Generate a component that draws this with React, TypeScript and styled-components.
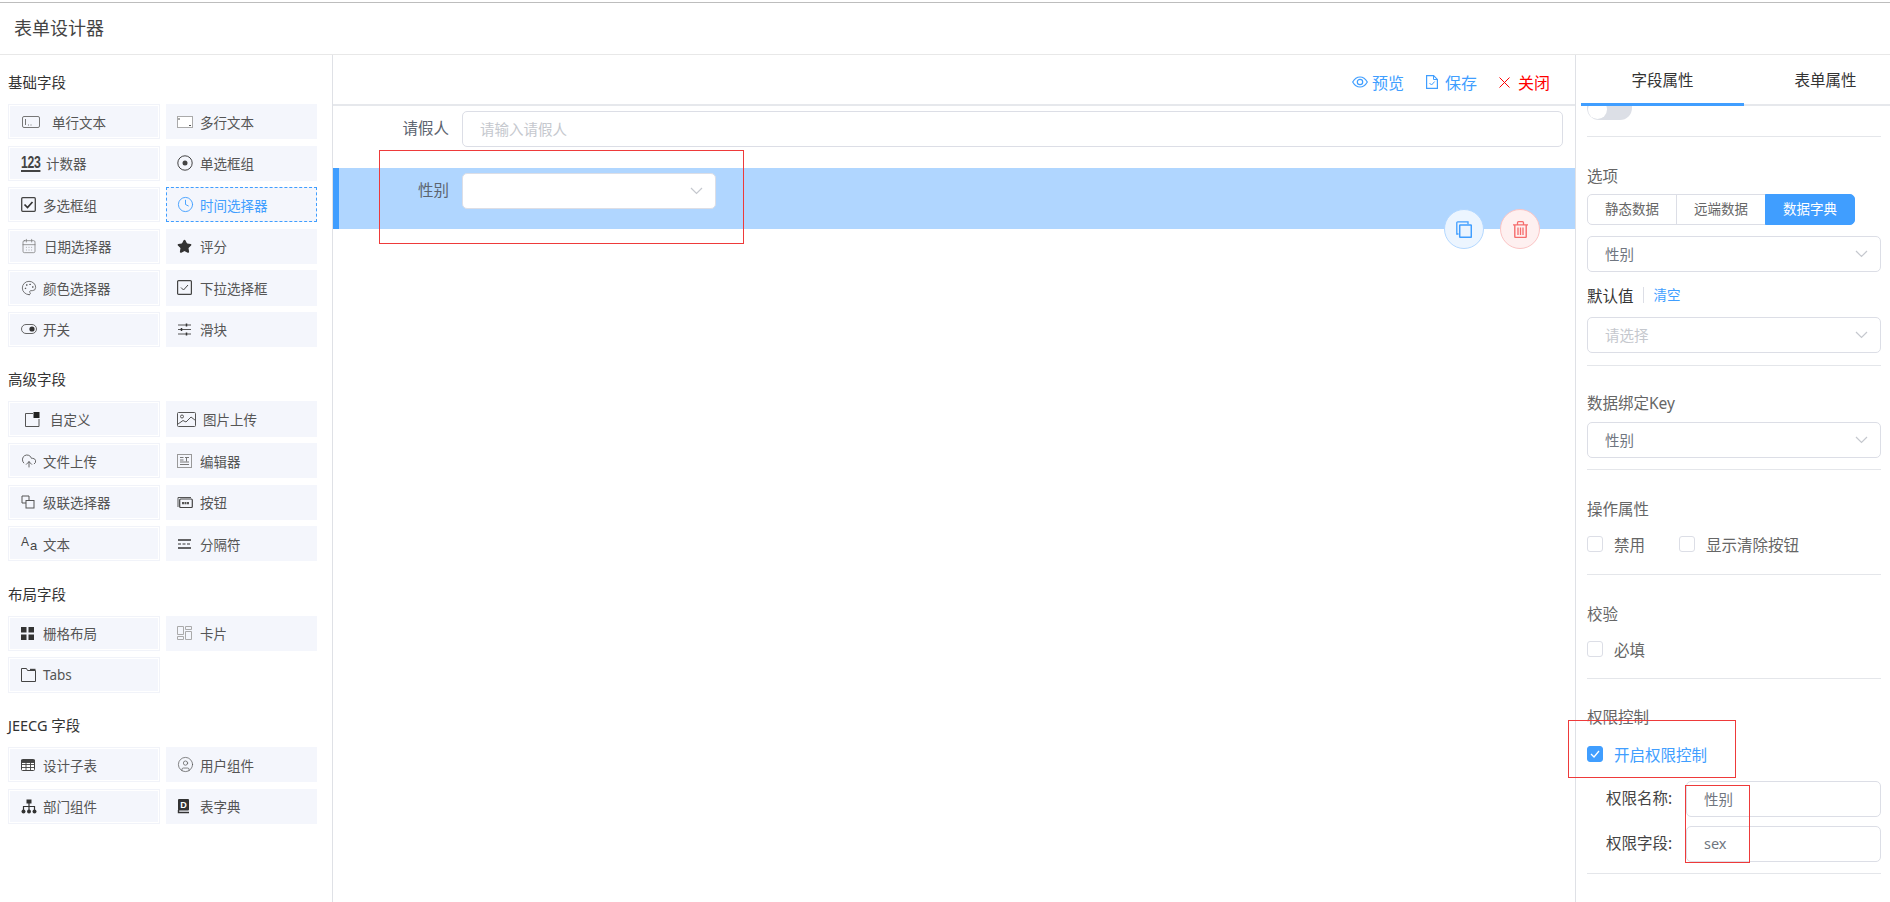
import React from 'react'
import styled, { createGlobalStyle } from 'styled-components'
import { CalendarDays, CircleUser, Clock, CloudUpload, Palette, Star } from 'lucide-react'

const Global = createGlobalStyle`
  html, body {
    margin: 0;
    padding: 0;
    background: #fff;
  }
  body {
    font-family: 'Noto Sans', 'Noto Sans CJK SC', sans-serif;
    color: #515a6e;
    overflow: hidden;
  }
  * {
    box-sizing: border-box;
  }
`

const Page = styled.div`
  position: relative;
  width: 1890px;
  height: 902px;
  overflow: hidden;
  padding-top: 2px;
`

const Header = styled.header`
  height: 53px;
  border-top: 1px solid #bdbdbd;
  border-bottom: 1px solid #e8e8e8;
  padding-left: 14px;
  font-size: 18px;
  line-height: 51px;
  color: #444;
`

const Body = styled.div`
  display: flex;
  height: 847px;
`

const LeftPanel = styled.aside`
  flex: none;
  width: 333px;
  border-right: 1px solid #dfe1e6;
  padding: 18px 0 0 8px;
`

const FieldSection = styled.section`
  margin-bottom: 23.400px;
`

const SectionTitle = styled.h3`
  margin: 0 0 11px;
  height: 20px;
  font-size: 14.5px;
  font-weight: 400;
  line-height: 18px;
  color: #333;
`

const FieldGrid = styled.div`
  display: grid;
  grid-template-columns: 152px 151px;
  grid-auto-rows: 35.2px;
  column-gap: 6px;
  row-gap: 6.4px;
`

const FieldItem = styled.div<{ $active?: boolean; $slot: number }>`
  display: flex;
  align-items: center;
  padding-left: 13px;
  background: #f4f6fc;
  font-size: 13.5px;
  color: ${(p) => (p.$active ? '#409eff' : '#555')};
  border: ${(p) => (p.$active ? '1px dashed #409eff' : 'none')};
  &:nth-child(odd) {
    box-shadow: inset 0 0 0 1px #f1f3f9, inset 0 0 0 2px #fff;
  }
  &:nth-child(even) {
    padding-left: ${(p) => (p.$active ? 10 : 11)}px;
  }
  > span:first-child {
    flex: none;
    display: flex;
    align-items: center;
    width: ${(p) => p.$slot}px;
  }
`

const CountGlyph = styled.span`
  display: inline-block;
  flex: none;
  width: 27px;
  border-bottom: 2px solid #444;
  font-family: 'Liberation Sans', sans-serif;
  font-size: 17px;
  font-weight: 700;
  line-height: 15px;
  letter-spacing: -0.5px;
  color: #444;
  transform: scaleX(0.72);
  transform-origin: left center;
`

const TextGlyph = styled.span`
  font-family: 'Liberation Sans', sans-serif;
  font-size: 12px;
  line-height: 16px;
  color: #444;
  position: relative;
  top: -2px;
  b {
    font-weight: 400;
    font-size: 13px;
    position: relative;
    top: 4px;
    left: 1px;
  }
`

const Center = styled.main`
  flex: none;
  width: 1242px;
  position: relative;
`

const Toolbar = styled.div`
  display: flex;
  justify-content: flex-end;
  align-items: center;
  gap: 22px;
  height: 51px;
  padding: 5px 25px 0 0;
  border-bottom: 2px solid #e6e8ec;
`

const ToolButton = styled.span<{ $danger?: boolean; $gap: number }>`
  display: flex;
  align-items: center;
  gap: ${(p) => p.$gap}px;
  font-size: 16px;
  color: ${(p) => (p.$danger ? '#f00' : '#409eff')};
`

const FormRow = styled.div<{ $selected?: boolean }>`
  position: relative;
  display: flex;
  align-items: flex-start;
  height: ${(p) => (p.$selected ? 61 : 46)}px;
  padding: 5px 12px 0 0;
  margin-bottom: ${(p) => (p.$selected ? 0 : 16)}px;
  border-left: 6px solid ${(p) => (p.$selected ? '#409eff' : 'transparent')};
  background: ${(p) => (p.$selected ? '#b0d6ff' : 'transparent')};
`

const FormLabel = styled.label`
  flex: none;
  width: 110px;
  margin-right: 13px;
  text-align: right;
  font-size: 15.5px;
  line-height: 35px;
  color: #5c6470;
`

const Control = styled.div<{ $w?: number; $placeholder?: boolean }>`
  display: flex;
  align-items: center;
  justify-content: space-between;
  flex: ${(p) => (p.$w ? `none` : '1')};
  width: ${(p) => (p.$w ? `${p.$w}px` : 'auto')};
  height: 36px;
  padding: 0 12px 2px 17px;
  background: #fff;
  border: 1px solid #dcdee6;
  border-radius: 5px;
  font-size: 14.5px;
  color: ${(p) => (p.$placeholder ? '#c5c8ce' : '#707680')};
  svg {
    position: relative;
    top: 1px;
  }
`

const RowActions = styled.div`
  position: absolute;
  right: 35px;
  bottom: -20px;
  display: flex;
  gap: 16px;
`

const RoundButton = styled.span<{ $danger?: boolean }>`
  display: flex;
  align-items: center;
  justify-content: center;
  width: 40px;
  height: 40px;
  border-radius: 50%;
  border: 1px solid ${(p) => (p.$danger ? '#fbc4c4' : '#b3d8ff')};
  background: ${(p) => (p.$danger ? '#fef0f0' : '#ecf5ff')};
  color: ${(p) => (p.$danger ? '#f56c6c' : '#409eff')};
`

const RightPanel = styled.aside`
  flex: none;
  width: 315px;
  border-left: 1px solid #dfe1e6;
  overflow: hidden;
`

const TabBar = styled.div`
  display: flex;
  height: 51px;
  margin-left: 5px;
  border-bottom: 2px solid #e6e8ec;
`

const Tab = styled.div<{ $active?: boolean }>`
  flex: none;
  width: 163px;
  height: 51px;
  text-align: center;
  font-size: 15.5px;
  line-height: 50px;
  color: #333;
  border-bottom: 3px solid ${(p) => (p.$active ? '#409eff' : 'transparent')};
`

const PropGroup = styled.div<{ $pt: number; $pb: number }>`
  margin: 0 9px 0 11px;
  padding: ${(p) => p.$pt}px 0 ${(p) => p.$pb}px;
  border-bottom: 1px solid #e4e6ea;
`

const ClippedToggle = styled.div`
  width: 45px;
  height: 14px;
  background: #dcdfe6;
  border-radius: 0 0 12px 12px;
  overflow: hidden;
  position: relative;
  &::after {
    content: '';
    position: absolute;
    left: 1px;
    top: -6px;
    width: 19px;
    height: 19px;
    border-radius: 50%;
    background: #fff;
  }
`

const PropLabel = styled.div<{ $mb: number }>`
  height: 22px;
  margin-bottom: ${(p) => p.$mb}px;
  font-size: 15.5px;
  line-height: 20px;
  color: #666;
`

const Segmented = styled.div`
  display: flex;
  width: 268px;
  height: 31px;
  margin-bottom: 11px;
`

const Segment = styled.span<{ $active?: boolean }>`
  flex: 1;
  margin-left: -1px;
  text-align: center;
  font-size: 13.5px;
  line-height: 28px;
  border: 1px solid ${(p) => (p.$active ? '#409eff' : '#dcdee6')};
  background: ${(p) => (p.$active ? '#409eff' : '#fff')};
  color: ${(p) => (p.$active ? '#fff' : '#666')};
  &:first-child {
    margin-left: 0;
    border-radius: 5px 0 0 5px;
  }
  &:last-child {
    border-radius: 0 5px 5px 0;
  }
`

const DefaultRow = styled.div`
  display: flex;
  align-items: center;
  height: 22px;
  margin: 12px 0 11px;
  font-size: 15.5px;
  color: #333;
`

const ClearLink = styled.span`
  margin-left: 9px;
  padding-left: 10px;
  border-left: 1px solid #dcdee6;
  font-size: 13.5px;
  line-height: 16px;
  color: #409eff;
`

const CheckRow = styled.div<{ $mb?: number }>`
  display: flex;
  height: 22px;
  gap: 34px;
  margin-bottom: ${(p) => p.$mb ?? 0}px;
`

const CheckItem = styled.span<{ $checked?: boolean }>`
  display: flex;
  align-items: center;
  gap: 11px;
  font-size: 15.5px;
  color: ${(p) => (p.$checked ? '#409eff' : '#666')};
`

const CheckBox = styled.i<{ $checked?: boolean }>`
  display: flex;
  align-items: center;
  justify-content: center;
  width: 16px;
  height: 16px;
  border-radius: 3px;
  border: 1px solid ${(p) => (p.$checked ? '#409eff' : '#dcdee6')};
  background: ${(p) => (p.$checked ? '#409eff' : '#fff')};
`

const PermRow = styled.div`
  display: flex;
  align-items: center;
  margin-bottom: 9px;
  &:last-child {
    margin-bottom: 0;
  }
`

const PermLabel = styled.label`
  flex: none;
  width: 99px;
  padding: 0 0 3px 19px;
  font-size: 15.5px;
  color: #444;
`

const Annotation = styled.div<{ $x: number; $y: number; $w: number; $h: number }>`
  position: absolute;
  left: ${(p) => p.$x}px;
  top: ${(p) => p.$y}px;
  width: ${(p) => p.$w}px;
  height: ${(p) => p.$h}px;
  border: 1px solid #ee3a3a;
  pointer-events: none;
`

const Chevron = () => (
  <svg width="13" height="8" viewBox="0 0 13 8" fill="none" stroke="#c5c8ce" strokeWidth="1.2">
    <polyline points="1,1 6.5,6.5 12,1" />
  </svg>
)

const Svg: React.FC<{ w?: number; h?: number; children: React.ReactNode }> = ({ w = 16, h = 16, children }) => (
  <svg width={w} height={h} viewBox={`0 0 ${w} ${h}`} fill="none" stroke="currentColor" strokeWidth="1">
    {children}
  </svg>
)

const icons = {
  input: (
    <Svg w={20} h={12}>
      <rect x="1.5" y="0.5" width="17" height="11" rx="1.5" stroke="#777" />
      <path d="M4.5 3v6M7 9h1M9.5 9h1" stroke="#777" />
    </Svg>
  ),
  textarea: (
    <Svg w={16} h={12}>
      <rect x="0.5" y="0.5" width="15" height="11" fill="#fff" stroke="#aaa" />
      <path d="M2 2v2M12 9.500h2" stroke="#555" />
    </Svg>
  ),
  count: <CountGlyph>123</CountGlyph>,
  radio: (
    <Svg>
      <circle cx="8" cy="8" r="7.200" stroke="#444" />
      <circle cx="8" cy="8" r="2.500" fill="#444" stroke="none" />
    </Svg>
  ),
  check: (
    <Svg w={15} h={15}>
      <rect x="0.700" y="0.700" width="13.600" height="13.600" rx="1" stroke="#444" strokeWidth="1.300" />
      <path d="M3.500 7.500l3 3 5-5.500" stroke="#333" strokeWidth="1.700" />
    </Svg>
  ),
  time: <Clock size={17} strokeWidth={1.3} />,
  date: <CalendarDays size={16} strokeWidth={1.1} color="#777" />,
  star: <Star size={15} fill="#333" color="#333" />,
  palette: <Palette size={16} strokeWidth={1.2} color="#555" />,
  select: (
    <Svg w={15} h={15}>
      <rect x="0.600" y="0.600" width="13.800" height="13.800" rx="1" stroke="#444" strokeWidth="1.200" />
      <path d="M4 7.500l2.500 2.500 4.500-5" stroke="#444" />
    </Svg>
  ),
  toggle: (
    <Svg w={16} h={10}>
      <rect x="0.500" y="0.500" width="15" height="9" rx="4.500" stroke="#666" />
      <circle cx="11" cy="5" r="2.600" fill="#333" stroke="none" />
    </Svg>
  ),
  slider: (
    <Svg w={15} h={13}>
      <path d="M1 2h13M1 6.500h13M1 11h13" stroke="#555" />
      <path d="M9.500 .5v3M4.500 5v3M9.500 9.500v3" stroke="#333" strokeWidth="1.500" />
    </Svg>
  ),
  custom: (
    <Svg w={19} h={15}>
      <path d="M12 1.500H4.500v13H18V7" stroke="#555" />
      <rect x="12.500" y="0" width="6" height="6" fill="#222" stroke="none" />
    </Svg>
  ),
  image: (
    <Svg w={20} h={15}>
      <rect x="0.500" y="0.500" width="18" height="14" rx="1" stroke="#555" />
      <circle cx="5" cy="4.500" r="1.500" stroke="#555" />
      <path d="M1 12l5-3.500 3 1.500 5-5 4.500 3.500" stroke="#555" />
    </Svg>
  ),
  upload: <CloudUpload size={16} strokeWidth={1.2} color="#444" />,
  editor: (
    <Svg w={15} h={14}>
      <rect x="0.500" y="0.500" width="14" height="13" stroke="#999" />
      <path d="M3 3.500h3.500M8 3.500h4M9.500 3.500v4M3 6h3.500M3 8h9M3 10.500h9" stroke="#777" />
    </Svg>
  ),
  cascader: (
    <Svg w={14} h={14}>
      <path d="M8 5V1H1v7h4" stroke="#555" />
      <rect x="5" y="5.500" width="8" height="7.500" stroke="#555" />
    </Svg>
  ),
  button: (
    <Svg w={16} h={12}>
      <path d="M1 11V1.500h13" stroke="#555" />
      <rect x="2.700" y="3" width="12.600" height="8.500" rx="1" stroke="#444" strokeWidth="1.200" />
      <path d="M5 7.200h7.500" stroke="#555" strokeWidth="2.200" strokeDasharray="2 0.500" />
    </Svg>
  ),
  text: (
    <TextGlyph>
      A<b>a</b>
    </TextGlyph>
  ),
  divider: (
    <Svg w={15} h={10}>
      <path d="M1 1h13M1 9h13" stroke="#333" strokeWidth="1.300" />
      <path d="M1 5h13" stroke="#333" strokeDasharray="3 1.500" />
    </Svg>
  ),
  grid: (
    <Svg w={13} h={13}>
      <path d="M0 0h5.500v5.500H0zM7.500 0H13v5.500H7.500zM0 7.500h5.500V13H0zM7.500 7.500H13V13H7.500z" fill="#333" stroke="none" />
    </Svg>
  ),
  card: (
    <Svg w={15} h={14}>
      <path d="M0.500 0.500h6v8h-6zM0.500 10.500h6v3h-6zM8.500 0.500h6v3h-6zM8.500 5.500h6v8h-6z" stroke="#aaa" />
    </Svg>
  ),
  tabs: (
    <Svg w={15} h={14}>
      <path d="M0.500 13.500V0.500h5l1 2h8v11z" stroke="#444" />
      <path d="M9 0.800h5.500v1.500H9z" fill="#444" stroke="none" />
    </Svg>
  ),
  table: (
    <Svg w={14} h={12}>
      <rect x="0.500" y="0.500" width="13" height="11" rx="1" fill="#fff" stroke="#444" />
      <path d="M0.500 1h13v2.500H.5zM0.500 5.500h13M0.500 8.500h13M5 3v8M9.500 3v8" fill="#444" stroke="#444" strokeWidth="0.900" />
    </Svg>
  ),
  user: <CircleUser size={17} strokeWidth={1} color="#555" />,
  org: (
    <Svg w={16} h={15}>
      <rect x="5.500" y="0.500" width="5" height="4" fill="#333" stroke="none" />
      <path d="M8 4v7M2.500 11V7.500h11V11" stroke="#333" strokeWidth="1.200" />
      <circle cx="2.500" cy="12.500" r="2" fill="#333" stroke="none" />
      <circle cx="8" cy="12.500" r="2" fill="#333" stroke="none" />
      <circle cx="13.500" cy="12.500" r="2" fill="#333" stroke="none" />
    </Svg>
  ),
  dict: (
    <Svg w={13} h={15}>
      <rect x="1" y="0" width="11" height="11.500" rx="1" fill="#333" stroke="none" />
      <path d="M1.500 11v2.500h10.500" stroke="#333" strokeWidth="1.400" />
      <text x="3.300" y="9" fontSize="9" fontWeight="700" fontFamily="Liberation Sans" fill="#fff" stroke="none">
        D
      </text>
    </Svg>
  ),
}

const EyeIcon = () => (
  <Svg w={16} h={12}>
    <path d="M.7 6C2.500 2.800 5 1 8 1s5.500 1.800 7.300 5C13.500 9.200 11 11 8 11S2.500 9.200.7 6z" strokeWidth="1.200" />
    <circle cx="8" cy="6" r="2.700" strokeWidth="1.200" />
  </Svg>
)

const SaveIcon = () => (
  <Svg w={12} h={14}>
    <path d="M.6.600h7L11.400 4.400v9H.6z" strokeWidth="1.200" />
    <path d="M7.500 1v3.500H11M3.500 8l2 2 3.200-3.500" />
  </Svg>
)

const CloseIcon = () => (
  <Svg w={11} h={11}>
    <path d="M.5.500l10 10M10.500.500l-10 10" />
  </Svg>
)

const CopyIcon = () => (
  <Svg w={16} h={17}>
    <path d="M2.500 13H.8V1.800a1 1 0 0 1 1-1H12v2.500" strokeWidth="1.300" />
    <rect x="3.700" y="4" width="11.600" height="12.300" rx=".5" strokeWidth="1.500" />
  </Svg>
)

const TrashIcon = () => (
  <Svg w={15} h={17}>
    <path d="M0 3.800h15M4.500 3.500V1.700a1 1 0 0 1 1-1h4a1 1 0 0 1 1 1v1.800" strokeWidth="1.300" />
    <path d="M1.800 4v11.500a1 1 0 0 0 1 1h9.400a1 1 0 0 0 1-1V4" strokeWidth="1.400" />
    <path d="M5 6.500v7.500M7.500 6.500v7.500M10 6.500v7.500" strokeWidth="1.300" />
  </Svg>
)

type Field = { label: string; icon: keyof typeof icons; slot?: number; active?: boolean }

const sections: { title: string; items: Field[] }[] = [
  {
    title: '基础字段',
    items: [
      { label: '单行文本', icon: 'input', slot: 31 },
      { label: '多行文本', icon: 'textarea' },
      { label: '计数器', icon: 'count', slot: 25 },
      { label: '单选框组', icon: 'radio' },
      { label: '多选框组', icon: 'check' },
      { label: '时间选择器', icon: 'time', active: true },
      { label: '日期选择器', icon: 'date', slot: 23 },
      { label: '评分', icon: 'star' },
      { label: '颜色选择器', icon: 'palette' },
      { label: '下拉选择框', icon: 'select' },
      { label: '开关', icon: 'toggle' },
      { label: '滑块', icon: 'slider' },
    ],
  },
  {
    title: '高级字段',
    items: [
      { label: '自定义', icon: 'custom', slot: 29 },
      { label: '图片上传', icon: 'image', slot: 26 },
      { label: '文件上传', icon: 'upload' },
      { label: '编辑器', icon: 'editor' },
      { label: '级联选择器', icon: 'cascader' },
      { label: '按钮', icon: 'button' },
      { label: '文本', icon: 'text' },
      { label: '分隔符', icon: 'divider' },
    ],
  },
  {
    title: '布局字段',
    items: [
      { label: '栅格布局', icon: 'grid' },
      { label: '卡片', icon: 'card' },
      { label: 'Tabs', icon: 'tabs' },
    ],
  },
  {
    title: 'JEECG 字段',
    items: [
      { label: '设计子表', icon: 'table' },
      { label: '用户组件', icon: 'user' },
      { label: '部门组件', icon: 'org' },
      { label: '表字典', icon: 'dict' },
    ],
  },
]

const App: React.FC = () => (
  <Page>
    <Global />
    <Header>表单设计器</Header>
    <Body>
      <LeftPanel>
        {sections.map((section) => (
          <FieldSection key={section.title}>
            <SectionTitle>{section.title}</SectionTitle>
            <FieldGrid>
              {section.items.map((item, i) => (
                <FieldItem key={item.label} $active={item.active} $slot={item.slot ?? (i % 2 ? 23 : 22)}>
                  <span>{icons[item.icon]}</span>
                  <span>{item.label}</span>
                </FieldItem>
              ))}
            </FieldGrid>
          </FieldSection>
        ))}
      </LeftPanel>

      <Center>
        <Toolbar>
          <ToolButton $gap={4}>
            <EyeIcon />
            预览
          </ToolButton>
          <ToolButton $gap={7}>
            <SaveIcon />
            保存
          </ToolButton>
          <ToolButton $gap={8} $danger>
            <CloseIcon />
            关闭
          </ToolButton>
        </Toolbar>
        <FormRow>
          <FormLabel>请假人</FormLabel>
          <Control $placeholder>请输入请假人</Control>
        </FormRow>
        <FormRow $selected>
          <FormLabel>性别</FormLabel>
          <Control $w={254}>
            <span />
            <Chevron />
          </Control>
          <RowActions>
            <RoundButton>
              <CopyIcon />
            </RoundButton>
            <RoundButton $danger>
              <TrashIcon />
            </RoundButton>
          </RowActions>
        </FormRow>
      </Center>

      <RightPanel>
        <TabBar>
          <Tab $active>字段属性</Tab>
          <Tab>表单属性</Tab>
        </TabBar>
        <PropGroup $pt={0} $pb={16}>
          <ClippedToggle />
        </PropGroup>
        <PropGroup $pt={29} $pb={12}>
          <PropLabel $mb={6}>选项</PropLabel>
          <Segmented>
            <Segment>静态数据</Segment>
            <Segment>远端数据</Segment>
            <Segment $active>数据字典</Segment>
          </Segmented>
          <Control>
            性别
            <Chevron />
          </Control>
          <DefaultRow>
            默认值
            <ClearLink>清空</ClearLink>
          </DefaultRow>
          <Control $placeholder>
            请选择
            <Chevron />
          </Control>
        </PropGroup>
        <PropGroup $pt={27} $pb={11}>
          <PropLabel $mb={7}>数据绑定Key</PropLabel>
          <Control>
            性别
            <Chevron />
          </Control>
        </PropGroup>
        <PropGroup $pt={29} $pb={19}>
          <PropLabel $mb={12}>操作属性</PropLabel>
          <CheckRow>
            <CheckItem>
              <CheckBox />
              禁用
            </CheckItem>
            <CheckItem>
              <CheckBox />
              显示清除按钮
            </CheckItem>
          </CheckRow>
        </PropGroup>
        <PropGroup $pt={29} $pb={18}>
          <PropLabel $mb={12}>校验</PropLabel>
          <CheckRow>
            <CheckItem>
              <CheckBox />
              必填
            </CheckItem>
          </CheckRow>
        </PropGroup>
        <PropGroup $pt={28} $pb={11}>
          <PropLabel $mb={14}>权限控制</PropLabel>
          <CheckRow $mb={16}>
            <CheckItem $checked>
              <CheckBox $checked>
                <svg width="10" height="8" viewBox="0 0 10 8" fill="none" stroke="#fff" strokeWidth="1.300">
                  <path d="M1 4l3 3 5-6" />
                </svg>
              </CheckBox>
              开启权限控制
            </CheckItem>
          </CheckRow>
          <PermRow>
            <PermLabel>权限名称:</PermLabel>
            <Control>性别</Control>
          </PermRow>
          <PermRow>
            <PermLabel>权限字段:</PermLabel>
            <Control>sex</Control>
          </PermRow>
        </PropGroup>
      </RightPanel>
    </Body>

    <Annotation $x={379} $y={150} $w={365} $h={94} />
    <Annotation $x={1568} $y={720} $w={168} $h={58} />
    <Annotation $x={1685} $y={785} $w={65} $h={78} />
  </Page>
)

export default App
